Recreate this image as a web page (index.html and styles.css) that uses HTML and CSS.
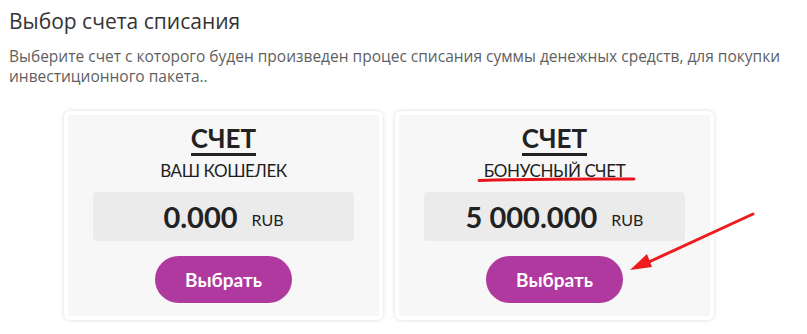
FILE: index.html
```html
<!DOCTYPE html>
<html lang="ru">
<head>
<meta charset="utf-8">
<link rel="stylesheet" href="styles.css">
</head>
<body>
<div class="page">
  <h1 class="title">Выбор счета списания</h1>
  <p class="desc">Выберите счет с которого буден произведен процес списания суммы денежных средств, для покупки инвестиционного пакета..</p>
  <div class="cards">
    <div class="card">
      <div class="card-inner">
        <div class="card-head">СЧЕТ</div>
        <div class="card-sub">ВАШ КОШЕЛЕК</div>
        <div class="amount"><span class="num">0.000</span><span class="cur">RUB</span></div>
        <button class="btn">Выбрать</button>
      </div>
    </div>
    <div class="card">
      <div class="card-inner">
        <div class="card-head">СЧЕТ</div>
        <div class="card-sub marked">БОНУСНЫЙ СЧЕТ
          <svg class="red-line" width="160" height="8" viewBox="0 0 160 8"><path d="M2 5.5 C40 4.5 90 3.5 157 4" stroke="#e8141b" stroke-width="3" fill="none" stroke-linecap="round"/></svg>
        </div>
        <div class="amount"><span class="num">5 000.000</span><span class="cur">RUB</span></div>
        <button class="btn">Выбрать</button>
      </div>
    </div>
  </div>
  <svg class="arrow" width="140" height="70" viewBox="0 0 140 70"><path d="M128 4 L13 57" stroke="#ee1c1c" stroke-width="3" fill="none" stroke-linecap="round"/><path d="M5 60 L22 44 L27 57 Z" fill="#ee1c1c"/></svg>
</div>
</body>
</html>
```
FILE: styles.css
```css
html, body { margin: 0; padding: 0; background: #fff; }
.page { position: relative; padding: 7px 0 0 9px; width: 798px; height: 327px; overflow: hidden; }
.title { margin: 0; font-family: "Open Sans", sans-serif; font-weight: 400; font-size: 21px; line-height: 28px; color: #333; }
.desc { margin: 11px 0 0 0; font-family: "Open Sans", sans-serif; font-size: 15.5px; line-height: 20px; color: #5f5f5f; width: 790px; }
.cards { display: flex; gap: 12px; margin: 25px 0 0 55px; }
.card { width: 311px; padding: 4px; background: #fff; border-radius: 6px; box-shadow: 0 0 4px rgba(0,0,0,0.15); }
.card-inner { background: #f7f7f7; height: 201px; display: flex; flex-direction: column; align-items: center; }
.card-head { margin-top: 9px; font-family: Lato, sans-serif; font-weight: 700; font-size: 26px; line-height: 28px; color: #222; border-bottom: 3px solid #222; padding-bottom: 1px; }
.card-sub { position: relative; margin-top: 4px; font-family: Lato, sans-serif; font-size: 17px; line-height: 22px; color: #1e1e1e; letter-spacing: -0.4px; }
.red-line { position: absolute; left: -7px; top: 15px; }
.amount { margin-top: 10px; width: 261px; height: 49px; background: #ebebeb; border-radius: 4px; display: flex; align-items: center; justify-content: center; gap: 14px; font-family: Lato, sans-serif; color: #222; }
.num { font-weight: 700; font-size: 29px; }
.cur { font-size: 16px; padding-top: 6px; }
.btn { margin-top: 15px; width: 137px; height: 47px; border: 0; border-radius: 24px; background: #b0399f; color: #fff; font-family: Lato, sans-serif; font-weight: 700; font-size: 19px; }
.arrow { position: absolute; left: 625px; top: 210px; }
```
